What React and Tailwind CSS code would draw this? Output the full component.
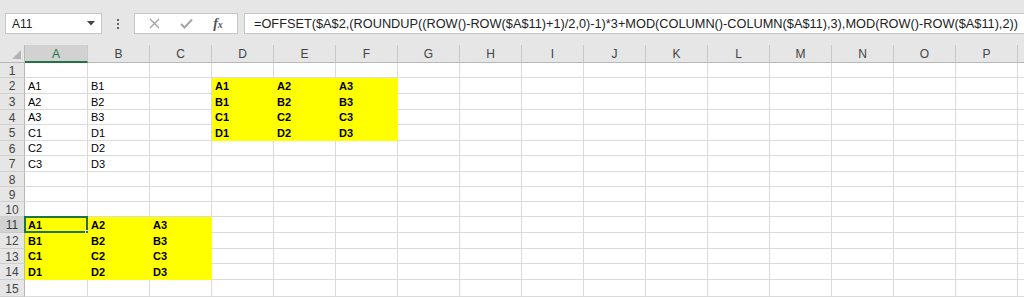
import React from 'react';

const columns = ['A', 'B', 'C', 'D', 'E', 'F', 'G', 'H', 'I', 'J', 'K', 'L', 'M', 'N', 'O', 'P'];

// row heights follow the screenshot (Excel rounds them to 15/16 px)
const rowHeights = [
  'h-[15px]', 'h-[16px]', 'h-[16px]', 'h-[15px]', 'h-[16px]',
  'h-[15px]', 'h-[16px]', 'h-[15px]', 'h-[15px]', 'h-[15px]',
  'h-[16px]', 'h-[16px]', 'h-[15px]', 'h-[16px]', 'h-[17px]',
];

const source = [
  ['A1', 'B1'],
  ['A2', 'B2'],
  ['A3', 'B3'],
  ['C1', 'D1'],
  ['C2', 'D2'],
  ['C3', 'D3'],
];

const block = [
  ['A1', 'A2', 'A3'],
  ['B1', 'B2', 'B3'],
  ['C1', 'C2', 'C3'],
  ['D1', 'D2', 'D3'],
];

function getCell(row, col) {
  // row is 1-based, col is 0-based
  if (row >= 2 && row <= 7 && col <= 1) {
    return { text: source[row - 2][col], bold: false, fill: false };
  }
  if (row >= 2 && row <= 5 && col >= 3 && col <= 5) {
    return { text: block[row - 2][col - 3], bold: true, fill: true };
  }
  if (row >= 11 && row <= 14 && col <= 2) {
    return { text: block[row - 11][col], bold: true, fill: true };
  }
  return { text: '', bold: false, fill: false };
}

function Toolbar() {
  return (
    <div className="flex h-[34px] pt-[13px]">
      <div className="ml-[5px] flex h-[21px] w-[97px] items-center justify-between border border-[#c6c6c6] bg-white pl-[6px] pr-[6px]">
        <span className="text-[12px] text-[#222]">A11</span>
        <svg width="8" height="5" viewBox="0 0 8 5">
          <path d="M0 0 L8 0 L4 4.5 Z" fill="#444" />
        </svg>
      </div>
      <div className="flex w-[32px] flex-col items-center justify-center gap-[2px]">
        <span className="h-[2px] w-[2px] bg-[#666]" />
        <span className="h-[2px] w-[2px] bg-[#666]" />
        <span className="h-[2px] w-[2px] bg-[#666]" />
      </div>
      <div className="flex h-[21px] w-[104px] items-center border border-[#c6c6c6] bg-white">
        <div className="flex w-[36px] justify-center pl-[2px]">
          <svg width="11" height="11" viewBox="0 0 11 11">
            <path d="M1 1 L10 10 M10 1 L1 10" stroke="#a0a0a0" strokeWidth="1.2" fill="none" />
          </svg>
        </div>
        <div className="flex w-[30px] justify-center">
          <svg width="13" height="11" viewBox="0 0 13 11">
            <path d="M1 6 L4.5 9.5 L12 1.5" stroke="#a6a6a6" strokeWidth="2" fill="none" />
          </svg>
        </div>
        <div className="flex w-[34px] justify-center">
          <span className="font-['Liberation_Serif',serif] text-[14px] font-bold italic leading-none text-[#555]">
            f<span className="text-[10px]">x</span>
          </span>
        </div>
      </div>
      <div className="ml-[6px] flex h-[21px] flex-1 items-center border border-r-0 border-[#c6c6c6] bg-white pl-[9px]">
        <span className="whitespace-nowrap text-[12.75px] text-[#222]">
          =OFFSET($A$2,(ROUNDUP((ROW()-ROW($A$11)+1)/2,0)-1)*3+MOD(COLUMN()-COLUMN($A$11),3),MOD(ROW()-ROW($A$11),2))
        </span>
      </div>
    </div>
  );
}

function ColumnHeaders() {
  return (
    <div className="flex h-[29px] items-end">
      <div className="relative h-[18px] w-[25px] border-r border-b border-[#b8b8b8]">
        <svg className="absolute right-[3px] bottom-[3px]" width="9" height="9" viewBox="0 0 9 9">
          <path d="M9 0 L9 9 L0 9 Z" fill="#b4b4b4" />
        </svg>
      </div>
      {columns.map((c, i) => (
        <div
          key={c}
          className={
            i === 0
              ? 'flex h-[18px] w-[63px] items-center justify-center border-r border-b-2 border-r-[#c8c8c8] border-b-[#217346] bg-[#d2d2d2] pt-[1px] text-[12px] text-[#217346]'
              : 'flex h-[18px] w-[62px] items-center justify-center border-r border-b border-r-[#c8c8c8] border-b-[#b8b8b8] text-[12px] text-[#444]'
          }
        >
          {c}
        </div>
      ))}
      <div className="h-[18px] flex-1 border-b border-[#b8b8b8]" />
    </div>
  );
}

function Row({ row }) {
  const selectedRow = row === 11;
  return (
    <div className={`flex ${rowHeights[row - 1]}`}>
      <div
        className={
          selectedRow
            ? 'flex w-[25px] items-center justify-center border-r border-b border-r-[#b8b8b8] border-b-[#c8c8c8] bg-[#d2d2d2] pt-[1px] text-[12px] text-[#3a3a3a]'
            : 'flex w-[25px] items-center justify-center border-r border-b border-r-[#b8b8b8] border-b-[#d0d0d0] pt-[1px] text-[12px] text-[#444]'
        }
      >
        {row}
      </div>
      {columns.map((c, col) => {
        const cell = getCell(row, col);
        const width = col === 0 ? 'w-[63px]' : 'w-[62px]';
        const look = cell.fill
          ? 'border-[#ffff00] bg-[#ffff00]'
          : 'border-[#dadada] bg-white';
        return (
          <div
            key={c}
            className={`relative flex items-end border-r border-b pb-[1px] pl-[3px] ${width} ${look}`}
          >
            <span
              className={
                cell.bold
                  ? 'text-[11px] font-bold leading-[12px] text-black'
                  : 'text-[11px] leading-[12px] text-black'
              }
            >
              {cell.text}
            </span>
            {row === 11 && col === 0 && (
              <>
                <div className="absolute -top-[1px] -left-[1px] -right-[1px] -bottom-[1px] border-2 border-[#217346]" />
                <div className="absolute -right-[4px] -bottom-[4px] h-[6px] w-[6px] border border-white bg-[#217346]" />
              </>
            )}
          </div>
        );
      })}
      <div className="flex-1 border-b border-[#dadada] bg-white" />
    </div>
  );
}

export default function App() {
  const rows = Array.from({ length: 15 }, (_, i) => i + 1);
  return (
    <div className="h-[297px] w-[1024px] overflow-hidden bg-[#e6e6e6] font-['Liberation_Sans',Arial,sans-serif]">
      <Toolbar />
      <ColumnHeaders />
      <div>
        {rows.map((r) => (
          <Row key={r} row={r} />
        ))}
      </div>
    </div>
  );
}
